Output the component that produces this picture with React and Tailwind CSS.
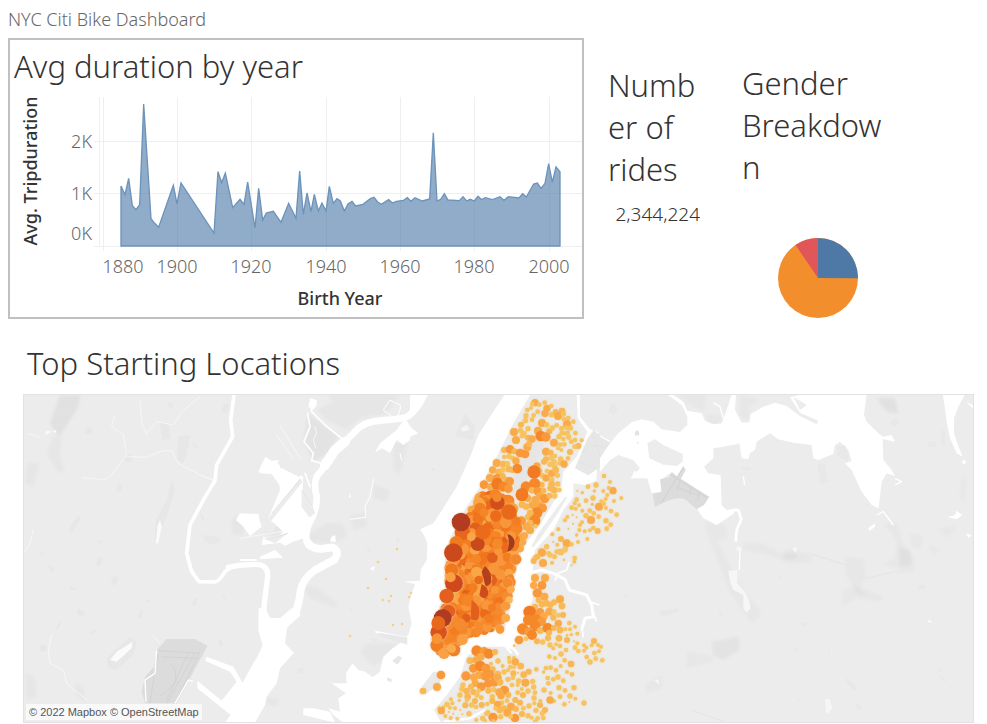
import React from "react";

const YEARS = [
  [123, "1880"],
  [177, "1900"],
  [251, "1920"],
  [326, "1940"],
  [400, "1960"],
  [474, "1980"],
  [549, "2000"],
];
const GRID_X = [103, 177, 251, 326, 400, 474, 549];

// Outline of the area series, in thirds of a pixel.
const AREA =
  "363,558 375,584 386,535 397,617 408,629 419,614 431,312 453,656 464,670 476,682 520,556 531,612 543,549 642,699 654,515 665,548 676,519 698,623 720,598 732,613 743,546 765,684 776,565 788,660 799,639 820,634 843,667 866,610 888,655 899,513 910,643 921,579 933,635 943,583 955,633 966,609 978,633 988,559 1000,610 1011,596 1021,603 1033,633 1044,612 1056,604 1067,618 1089,613 1111,596 1122,592 1133,606 1144,613 1166,599 1177,609 1189,604 1211,601 1222,593 1233,604 1245,593 1267,603 1289,597 1300,398 1311,603 1322,598 1333,581 1344,600 1378,602 1389,590 1400,603 1411,598 1423,603 1434,589 1445,599 1456,593 1478,599 1500,590 1512,601 1525,590 1557,594 1568,581 1579,591 1601,552 1612,549 1623,565 1635,550 1646,491 1657,547 1668,501 1680,515 1680,738 363,738";

const NORTH_DOTS =
  "375,38,11 404,38,7 388,44,7 367,42,7 411,55,11 424,48,7 352,60,7 363,54,6 348,77,8 371,76,7 383,65,7 405,70,11 424,74,8 437,66,9 456,63,10 444,78,12 460,72,8 475,84,7 490,95,7 471,102,12 462,88,7 346,92,8 366,89,7 396,99,12 410,104,8 418,124,9 427,114,8 440,106,7 455,115,8 470,113,7 481,114,8 333,104,9 354,116,8 384,122,12 312,126,12 331,121,8 342,130,8 337,137,8 318,150,12 354,143,9 366,147,11 392,138,16 408,141,14 432,158,12 447,140,8 460,147,7 476,141,8 455,129,7 463,130,7 473,128,7 496,129,7 484,155,7 495,150,7 505,168,9 515,151,6 494,170,7 450,164,7 463,163,7 480,186,9 444,175,6 454,180,6 282,180,9 300,178,13 313,184,9 330,189,13 345,192,13 352,172,12 357,162,9 297,199,8 283,201,7 309,205,8 318,213,11 408,185,12 422,188,9 435,198,7 424,204,8 408,208,9 402,215,9 432,215,8 420,223,8 434,229,8 448,220,7 452,207,8 474,205,7 462,222,11 260,219,12 279,222,10 292,221,8 296,237,10 322,236,14 308,240,9 248,240,11 266,246,10 278,240,8 381,228,11 388,242,9 425,250,11 437,240,10 442,256,8 411,243,7 240,264,12 262,266,14 278,258,9 288,270,10 299,274,13 397,257,8 408,264,11 425,269,8 395,284,9 425,283,10 443,282,8 448,300,7 432,300,10 421,295,9 434,318,8 222,284,13 243,291,12 262,282,18 280,290,15 295,296,13 348,290,16 374,281,17 366,301,10 384,304,13 400,302,9 389,318,12 404,326,14 418,317,9 336,314,19 218,322,18 353,325,11 376,330,12 368,345,12 336,344,10 349,350,10 385,345,12 397,354,14 380,369,17 361,369,10 354,381,9 374,392,17 360,399,10 334,393,14 350,410,12 360,420,12 376,408,7 343,437,11 338,456,11 330,475,12";

const QUEENS_DOTS =
  "582,258,7 600,276,6 558,285,8 534,290,7 609,302,11 596,294,6 580,303,6 553,303,5 517,308,5 502,303,3 634,324,6 592,315,6 587,327,6 549,324,8 528,332,7 500,329,7 494,340,6 507,346,6 485,353,7 497,356,6 547,343,5 567,350,12 581,341,7 588,354,6 603,363,7 620,374,7 612,333,6 574,334,6 517,362,6 539,362,7 551,370,7 472,381,6 465,391,6 488,375,3 500,382,3 528,377,8 543,390,12 566,380,7 588,392,8 602,404,7 590,416,7 516,397,6 510,405,6 475,416,3 489,401,3 508,420,6 524,424,6 540,421,6 550,414,7 563,423,9 445,418,6 427,433,6 500,435,5 453,447,9 442,464,6 470,460,12 484,463,7 430,456,3 504,456,6 532,447,6 410,470,8 395,486,11 466,476,8 452,486,10 440,485,7 420,495,8 433,500,7 462,509,3 494,504,7 375,504,8";

const BROOKLYN_DOTS =
  "396,8,12 416,10,7 382,20,9 434,20,7 399,39,12 371,33,9 426,38,6 452,6,8 466,2,6 462,30,3 494,24,6 493,35,6 485,46,3 375,84,12 405,84,12 371,106,11 396,106,13 382,129,14 403,140,12 386,150,9 450,148,12 456,168,10 432,157,9 421,165,9 396,163,10 410,160,10 375,170,9 359,186,19 390,187,13 401,199,12 418,185,12 432,186,8 445,196,7 459,195,9 430,203,9 378,208,16 355,210,16 395,215,13 375,228,16 338,237,17 356,245,13 366,255,15 390,242,10 404,238,9 413,234,15 431,234,9 445,220,11 417,248,9 450,240,10 447,265,10 327,270,13 348,266,7 381,274,9 398,276,8 414,264,9 466,238,6 478,219,7 495,230,6 480,238,6 484,254,5 502,251,6 471,270,9 471,256,4 492,274,3 502,280,6 495,293,7 522,286,6 529,293,6 545,286,6 552,273,9 564,285,6 573,290,6 567,304,6 553,309,7 522,302,6 505,303,7 530,321,7 540,336,8 557,326,7 577,331,7 420,285,8 430,295,6 438,283,6 450,288,7 468,300,7 313,287,4 453,312,8 435,324,6 418,320,7 464,331,7 483,342,10 452,348,6 422,353,7 408,354,7 438,361,7 379,358,7 401,366,5 413,384,7 430,388,7 444,381,8 460,392,7 471,366,6 486,373,7 492,413,8 447,413,8 415,400,7 402,420,8 465,421,7 422,429,6 480,438,8 496,446,6 450,440,7 432,453,6 463,463,7 478,456,3 522,459,8 420,450,11";

const SOUTH_DOTS =
  "200,302,16 222,304,13 236,311,15 255,306,9 212,320,12 180,332,10 200,330,12 190,355,13 211,348,16 228,355,14 243,341,6 248,358,9 264,333,8 263,372,10 278,348,6 282,366,8 297,323,6 312,324,6 299,335,7 316,336,11 332,348,10 301,351,7 312,352,6 294,361,6 310,370,9 324,368,3 356,365,9 341,374,10 168,378,14 192,382,12 208,375,12 226,378,14 240,373,13 196,400,11 214,410,13 235,400,13 253,396,14 263,384,12 270,397,10 294,388,8 309,383,7 326,393,8 306,405,7 323,405,6 346,398,12 368,394,8 354,423,8 335,417,6 371,411,8 375,428,7 339,435,9 323,428,7 372,444,8 159,405,8 156,417,8 150,435,8 170,423,10 173,440,10 183,410,9 190,426,9 201,435,8 206,422,7 214,443,7 235,422,9 251,419,8 247,440,8 283,421,14 268,427,12 273,437,11 295,435,9 316,450,9 291,452,7 330,458,9 276,458,7 263,463,11 247,453,9 232,462,7 215,465,9 198,471,7 195,453,9 185,465,8 171,450,7 166,466,9 303,470,12 318,477,9 282,475,9 292,488,12 269,480,10 257,475,7 249,502,14 272,500,8 234,487,7 229,491,7 315,504,13 302,500,7 336,492,9 340,475,7 357,468,8 373,460,6 390,465,9 391,453,6 405,480,9 397,490,8 378,481,8 354,497,8 383,505,7 400,504,7 365,503,6 376,515,7 177,491,8 151,480,3 135,475,6 148,451,5 123,448,6 127,460,6 111,463,8 100,472,6 120,473,6 88,475,6 94,482,11 106,498,6 116,486,3 130,491,3 122,504,6 142,506,6 157,493,3 199,510,6 218,505,8 225,512,6 250,514,7 93,375,13 81,411,12 39,423,10";

// Largest stations: x, y, radius, fill.
const HOT_NORTH = [
  [262, 338, 22, "#d04f1f"],
  [261, 322, 14, "#f58a2c"],
  [297, 366, 23, "#e8691c"],
  [157, 428, 23, "#e8661b"],
  [153, 396, 28, "#b33a20"],
  [140, 458, 20, "#f07a20"],
  [130, 488, 28, "#cc4a1e"],
  [203, 462, 21, "#c8481f"],
  [220, 427, 22, "#ec6b1b"],
  [184, 440, 13, "#f9a548"],
  [262, 462, 16, "#f58a2c"],
];
const HOT_SOUTH = [
  [125, 60, 20, "#f0791f"],
  [132, 100, 27, "#cf4a1e"],
  [122, 82, 15, "#f8a043"],
  [110, 138, 22, "#e4611b"],
  [116, 184, 20, "#e4611b"],
  [98, 204, 27, "#ae3b20"],
  [86, 247, 25, "#d7541e"],
  [85, 219, 21, "#e8671b"],
  [81, 286, 20, "#f17f24"],
  [81, 266, 16, "#f89435"],
  [102, 310, 17, "#f9a044"],
  [132, 300, 19, "#f2802a"],
  [125, 296, 13, "#f9ac4c"],
  [158, 270, 15, "#f9a142"],
];

function tone(r) {
  if (r >= 18) return "#f17a20";
  if (r >= 15) return "#f5892c";
  if (r >= 13) return "#f8993a";
  if (r >= 11) return "#f9ab4a";
  if (r >= 9) return "#f8b853";
  return "#f6c35b";
}

function Dots({ list }) {
  return list.split(" ").map((entry, i) => {
    const [x, y, r] = entry.split(",").map(Number);
    return <circle key={i} cx={x} cy={y} r={r} fill={tone(r)} />;
  });
}

// Midtown and downtown: bounds of the packed band as [y, left, right].
const BAND = [
  [318, 225, 275],
  [345, 200, 305],
  [400, 178, 325],
  [450, 145, 322],
  [500, 130, 315],
  [560, 125, 300],
  [620, 120, 290],
  [660, 115, 282],
  [700, 95, 272],
  [725, 90, 230],
  [740, 90, 150],
  [785, 95, 140],
];

function bandAt(y) {
  for (let i = 1; i < BAND.length; i++) {
    const a = BAND[i - 1];
    const b = BAND[i];
    if (y <= b[0]) {
      const t = (y - a[0]) / (b[0] - a[0]);
      return [a[1] + (b[1] - a[1]) * t, a[2] + (b[2] - a[2]) * t];
    }
  }
  return [95, 140];
}

function packedStations() {
  let seed = 41;
  const rand = () => {
    seed = (seed * 1103515245 + 12345) % 2147483648;
    return seed / 2147483648;
  };
  const fills = ["#f9a646", "#f8963a", "#f68a2e", "#f58528", "#f37e24", "#f0741e", "#ec6b1b", "#f8963a", "#f58528", "#f37e24"];
  const out = [];
  for (let y = 318; y < 785; y += 9) {
    const [left, right] = bandAt(y);
    for (let x = left; x <= right; x += 17) {
      const r = 11 + rand() * 8;
      const edge = Math.min(x - left, right - x) < 14 || y > 690;
      const pick = Math.floor(rand() * (edge ? 5 : fills.length));
      const deep = !edge && y > 330 && rand() > 0.94;
      out.push({
        x: Math.round(x + (rand() - 0.5) * 16),
        y: Math.round(y + (rand() - 0.5) * 10),
        r: Math.round(r),
        fill: deep ? "#e0601c" : fills[pick],
        order: rand(),
      });
    }
  }
  return out.sort((a, b) => a.order - b.order);
}
const PACKED = packedStations();

function DurationChart() {
  return (
    <svg viewBox="10 92 572 225" className="block h-auto w-full font-['Noto_Sans',sans-serif]" role="img" aria-label="Average trip duration by birth year">
      <g stroke="#efefef" strokeWidth="1" shapeRendering="crispEdges">
        <path d="M99.5 97V246M94 141.5H582M94 193.5H582M94 246.5H582" />
        {GRID_X.map((x) => (
          <path key={x} d={`M${x + 0.5} 97V251`} />
        ))}
      </g>
      <polygon transform="scale(.33333)" points={AREA} fill="#4e79a7" fillOpacity=".62" stroke="#6c93bb" strokeWidth="4" />
      <g fill="#666" fontSize="18" fontWeight="300">
        <text x="92" y="148" textAnchor="end">2K</text>
        <text x="92" y="200" textAnchor="end">1K</text>
        <text x="92" y="240" textAnchor="end">0K</text>
        {YEARS.map(([x, label]) => (
          <text key={label} x={x} y="273" textAnchor="middle">{label}</text>
        ))}
      </g>
      <g fill="#333" fontSize="18" fontWeight="500" textAnchor="middle">
        <text x="340" y="305">Birth Year</text>
        <text transform="translate(37 171) rotate(-90)">Avg. Tripduration</text>
      </g>
    </svg>
  );
}

function GenderPie() {
  return (
    <svg viewBox="0 0 80 80" className="size-20" role="img" aria-label="Gender breakdown">
      <circle cx="40" cy="40" r="40" fill="#f28e2b" />
      <path d="M40 40V0A40 40 0 0 1 80 40.300Z" fill="#4e79a7" />
      <path d="M40 40L17.500 7A40 40 0 0 1 40 0Z" fill="#e15759" />
    </svg>
  );
}

function WestMap() {
  return (
    <>
      <g transform="translate(0 330) scale(.33333)">
        <g fill="#e6e6e6" filter="url(#soft)">
          <path d="M180 195H240L235 230L185 310L175 320L150 280Z" fill="#e1e1e1" />
          <path d="M160 320L185 320L180 380L195 430L170 420L140 370Z" />
          <path d="M80 400L120 400L100 470L75 460ZM75 1030L105 1040L110 1100L80 1110ZM225 1060L250 1070L255 1120L225 1090Z" />
        </g>
        <g fill="#e7e7e7">
          <path d="M515 450L525 480L500 560L485 590L475 640L465 620L468 570L500 510ZM480 275L505 285L512 325L485 330ZM535 320L570 315L560 370L550 400L530 390ZM575 330L595 350L585 358ZM500 215L522 222L512 240ZM235 555L242 565L218 605L205 600ZM295 680L310 685L298 712L288 705ZM340 735L357 743L345 767L333 760ZM292 630L304 630L300 642ZM235 835L255 850L245 860L230 848ZM320 985L390 920L410 935L400 975L350 1020L325 1015ZM270 910L283 897L288 903L273 918ZM437 808L450 810L442 820ZM582 805L593 808L585 830L576 826ZM600 548L614 565L606 572ZM608 615L660 630L650 642L615 637ZM205 765L230 780L215 780ZM140 700L163 718L155 728ZM120 672L134 665L128 677ZM350 470L363 460L366 480L350 487ZM180 875L184 880L172 900L167 895ZM418 845L430 842L423 864L415 864ZM655 925L670 940L660 953ZM672 220L690 225L680 250L665 245ZM665 795L680 802L672 808Z" />
          <circle cx="265" cy="302" r="11" /><circle cx="385" cy="385" r="12" /><circle cx="130" cy="955" r="11" />
        </g>
        <path d="M500 927H585L622 947L530 1120H435L425 1085L435 1040L462 1010L470 960Z" fill="#dcdcdc" />
        <path d="M470 962L606 970M485 980L590 985M600 965L525 1120M585 968L500 1120M475 970L465 1020L450 1120M565 968L500 1110M510 1000Q535 1020 525 1060L480 1100" fill="none" stroke="#d3d3d3" strokeWidth="3" />
        <g fill="none" stroke="#f6f6f6" strokeWidth="3" strokeLinejoin="round">
          <path d="M345 255L335 290L370 315L380 375L330 440L310 450L245 443M380 380L440 382L490 362H515L535 400L600 435L645 452M420 210L425 280L440 310L470 275L520 285L550 240L600 200M85 310L118 323M100 600L90 640L73 668M155 912L145 960L150 1000L190 1020L200 1060L260 1110M455 910L480 940" />
          <path stroke="#fff" strokeWidth="4" d="M470 960L465 1030L435 1050L438 1115M525 1120L565 1050L580 1055" />
        </g>
        <g fill="#fbfbfb">
          <path d="M480 570L485 590L475 640H468L472 590ZM398 935L395 955L350 995L330 990L350 965ZM135 315L140 302L155 305ZM158 302L170 300L165 310Z" />
        </g>
      </g>

      <g transform="translate(200 390) scale(.33333)">
        <g fill="#e6e6e6" filter="url(#soft)">
          <path d="M325 70L415 140L385 190L340 215L310 155Z" fill="#e3e3e3" />
          <path d="M440 12H600L560 70L480 85L440 120L380 90L350 60ZM420 60L380 12H450Z" />
          <path d="M95 385L135 370L130 440L95 430ZM380 400L430 400L440 440L400 460L320 455L340 420ZM500 760L590 760L580 790L520 830L480 790ZM580 160L625 150L600 255L580 240ZM520 285L570 300L560 335L520 325ZM450 375L500 370L500 410L460 420ZM310 590L350 590L410 640V655L330 625ZM270 370L240 440L190 430ZM200 920L240 930L225 950L195 940Z" />
        </g>
        <path d="M0 755L20 770L5 800H0Z" fill="#dcdcdc" />
        <g fill="#e8e8e8">
          <path d="M10 435L60 440V458L15 455ZM500 470L515 480L505 490ZM590 440L605 448L590 458ZM510 745L535 745L530 760ZM450 650L460 655L450 665ZM290 835L310 830L313 850L295 850ZM470 850L490 855L480 885L470 880Z" />
        </g>
        <g fill="none" stroke="#f7f7f7" strokeWidth="3">
          <path d="M240 105L300 205M230 135L278 205M120 445L270 420M0 255L40 270M345 110L350 130L340 150L348 175" />
        </g>
        <g fill="none" stroke="#fff" strokeLinejoin="round" strokeLinecap="round">
          <path strokeWidth="11" d="M102 15L92 90L98 140L50 225L45 272L10 330L-30 405L-40 490L-25 545L-3 575L45 576Q60 572 75 545Q90 530 120 527" />
          <path strokeWidth="16" d="M85 532Q110 525 165 523Q205 522 203 560L193 640L190 700" />
          <path strokeWidth="20" d="M655 12L645 50Q635 82 600 86L540 92Q490 95 465 125L440 150" />
          <path strokeWidth="30" d="M435 155L405 180L375 225" />
          <path strokeWidth="20" d="M385 215L350 260Q340 285 350 320Q352 360 328 400Q310 440 325 465" />
          <path strokeWidth="23" d="M322 455Q335 480 370 476L398 472Q422 485 402 510L345 540Q310 565 302 600Q298 640 285 672" />
          <path strokeWidth="5" d="M323 70L330 110L312 155L340 190L335 212L370 222M333 45L335 65L375 105L425 145M315 250L330 290" />
          <path strokeWidth="3" d="M520 268L510 320L495 350L498 382L450 388M600 60L590 90L550 60L570 30L600 45ZM600 190L605 210" />
        </g>
        <g fill="#fff">
          <path d="M176 242L196 200L215 212L240 210L240 235L270 235L290 250L310 260L308 300L305 350L330 385L325 440L280 455L255 467L240 458L185 465L190 440L225 445L250 425L205 385L240 300L238 285L215 252L180 250Z" />
          <path d="M120 370L175 372L180 395L185 410L150 438L130 410L108 390ZM180 500L225 480L250 503L180 508ZM120 507H170V513H120Z" />
          <path d="M540 160L590 120L615 85L635 115L630 150L610 165L590 150L570 188L545 175L525 188ZM330 25L350 30V45L340 60L325 50ZM640 12H685L665 50L640 80ZM445 322L452 310V322ZM510 535L525 528L520 542ZM395 440L405 435L408 455H390Z" />
          <path d="M176 655L196 655L210 683L240 685L275 655H300V678L262 712L255 760L282 788L240 835L230 880L200 920L195 945L165 998H75L92 975L-8 895V872L65 932L110 875L90 845L15 812L20 800L100 830L128 878L155 828L172 800L188 766L175 720Z" />
        </g>
        <path d="M300 265L205 385L214 392L308 275ZM200 400L230 405L215 430L185 420ZM190 445L265 428L225 460ZM305 300L335 340L345 370L330 382L305 350ZM275 225L300 230V262L255 240L232 220L240 205Z" fill="#ececec" />
        <path d="M300 270L215 370M200 450L265 430M305 300L335 345" stroke="#e3e3e3" strokeWidth="3" fill="none" />
      </g>
    </>
  );
}

function HarborMap() {
  return (
    <>
      <g transform="translate(200 390) scale(.33333)" fill="#fff">
        <path d="M915 12L870 80L835 135L815 190L770 290L720 370L700 400L660 418L672 435L682 460L680 510L662 540L660 572L610 575L645 582L632 622L625 650L635 700L625 735L600 760L578 775L550 800L540 845L518 862L495 845L475 840L458 820L438 850L440 880H395L438 910L415 925L420 965L385 955L400 975L430 998H915L900 940L945 880L990 800L1180 500L1200 12Z" />
        <path d="M310 955H340L390 965L405 998L350 985L310 975Z" />
        <path d="M525 722L620 740L622 748L527 728Z" />
        <path d="M536 728L622 742V764L538 738Z" fill="#e8e8e8" />
        <path d="M577 812L595 797L607 803L592 824ZM560 862L575 868V876L562 872Z" fill="#e6e6e6" />
      </g>
      <g transform="translate(410 390) scale(.33333)">
        <path d="M362 12H500L503 85L532 125L500 200L460 245L453 300L425 345L390 405L340 470L328 510L315 560L308 630L285 715L240 728L165 745L130 800L90 800L60 750L75 680L105 610L105 480L150 380L210 290L260 200L310 100Z" fill="#ececec" />
        <path d="M510 12H665V105L630 150L600 155L575 130L540 118L510 80Z" fill="#ececec" />
        <path d="M495 235L530 150L550 120L570 135L603 160L590 190L570 200L572 230L535 256Z" fill="#e7e7e7" />
        <path d="M515 190L535 165L580 170M505 215L560 235M550 130L570 200" fill="none" stroke="#e0e0e0" strokeWidth="2" />
        <path d="M365 468L385 430L465 320L472 322L440 375L395 440L370 472Z" fill="#ececec" />
        <path d="M665 200L625 198L595 235L565 270L525 285L490 280L490 320L460 360L430 420L375 480L365 560L368 630L340 680L335 740L310 780L285 770L210 770L170 800L150 860L110 915L72 960L95 1000H665Z" fill="#ececec" />
        <path d="M370 60L420 60L390 110L345 190L325 220L300 300L320 330L350 270L385 210L420 120Z" fill="#e6e6e6" filter="url(#soft)" />
        <path d="M35 890L70 845L95 845L90 880L45 915Z" fill="#e9e9e9" />
        <path d="M165 70L195 110L190 150L135 140ZM65 230L75 238L65 245ZM610 40L622 60L610 72L597 60Z" fill="#e7e7e7" />
        <path d="M150 115L170 105L180 118L160 125Z" fill="#f4f4f4" />
        <path d="M0 12H12V60H0ZM25 12H50L20 45ZM0 110L25 130L0 140Z" fill="#fff" />
      </g>
      <g transform="translate(410 550) scale(.33333)" fill="none" stroke="#fff" strokeLinejoin="round">
        <path strokeWidth="9" d="M362 68L395 60L430 70L465 88L478 120L530 135L545 165L550 200L525 205L515 240" />
        <path strokeWidth="5" d="M435 92L445 70L470 60L478 35M540 155L568 165M550 190L560 215M515 225L520 262" />
        <path strokeWidth="7" d="M285 260L325 315M275 275L305 310M100 515L180 505L225 480" />
      </g>
    </>
  );
}

function EastMap() {
  return (
    <g transform="translate(600 390) scale(.33333)">
      <g fill="#e7e7e7" filter="url(#soft)">
        <path d="M230 12H320L310 65L265 40ZM420 12L480 30L450 50L445 95L420 80ZM320 70L365 80V105H320Z" />
        <path d="M830 25L885 25L895 70L860 65Z" fill="#e1e1e1" />
        <path d="M310 395L375 405L385 445L350 450L375 500L430 600L480 660V685L455 700L385 600L340 480ZM430 458L485 460L540 490L570 475L635 495L630 518L570 520L500 495L430 480ZM735 500L790 505L800 560L780 590L850 620L840 635L770 625L725 650L730 600L760 590L735 550ZM850 400L890 400L910 460L945 510L940 545L900 550L895 535L850 525L885 505L890 450ZM930 430L970 440L960 475L935 470ZM985 465L1018 480L1000 498ZM1085 260L1100 265L1092 340L1080 320ZM1015 415L1075 410L1040 445Z" />
        <path d="M335 755L415 740L420 780L370 810L340 795Z" fill="#e3e3e3" />
        <path d="M260 785L335 795L340 815L260 835ZM140 880L185 855L190 890L150 905L135 915Z" />
        <path d="M895 470L930 480L935 525L900 530ZM550 490H590V510H550ZM760 580L800 620L770 610Z" fill="#e0e0e0" />
      </g>
      <g fill="#e8e8e8">
        <path d="M652 222L675 220L685 275L660 285ZM180 662L235 655L237 665L182 682ZM870 95L885 85L900 97L880 110ZM425 232H452V240H425ZM985 155H1008V172H985ZM1005 832L1025 840L1020 845ZM1012 855L1040 870L1035 875ZM740 862L770 890L765 905L740 880ZM760 935L785 950L775 962ZM955 585H975V597H955ZM585 770L595 785H583ZM685 775L692 795L683 785ZM600 695L625 700L615 710ZM30 40L48 48L42 75L28 65ZM70 612L88 620L80 625ZM355 665L373 672L360 680ZM535 555L545 562L535 568ZM590 925L600 932L592 938ZM1020 120L1035 125V170L1025 160Z" />
      </g>
      <path d="M633 492L740 525M800 565L900 542M275 962L365 992V998" fill="none" stroke="#e6e6e6" strokeWidth="4" />
      <path
        fill="#fff"
        d="M0 205L30 160L55 130L95 97L125 88L160 95L185 118L240 126L262 105L262 80L245 45L200 12H215L250 35L262 62L305 70L315 92L340 103L365 100L385 45L395 12H408L405 60L425 98L448 97L452 72L490 50L525 38L560 48L600 78L650 103L655 92L600 68L570 22L610 12L800 12L792 75L800 95L835 130L850 140L875 135L885 155L848 148L850 210L875 240L885 258L860 250L845 275L836 355L815 345L785 305L755 240L735 220L755 213L745 180L720 155L705 165L700 192L655 210L640 205L635 165L580 158L535 148L510 130L470 155L465 180L450 190L445 208L425 205L418 160L400 165L340 175L340 205L312 230L325 250L362 255L365 345L380 360L410 355L400 372L350 405L310 385L290 355L325 320L250 270L210 250L182 270L183 305L155 310L142 265L92 265L120 235L100 210L55 195L30 210L0 245Z"
      />
      <path d="M142 160L165 148L190 165L248 192V215L230 228L190 224L148 205Z" fill="#ececec" />
      <path d="M105 125L115 120L118 135L105 137ZM112 155L118 158L112 162Z" fill="#e2e2e2" />
      <path d="M580 20L620 45L600 60Z" fill="#ececec" />
      <path d="M158 312L185 305L180 268L208 262L215 245L232 260L250 228L257 240L242 268L328 320L312 345L290 358L255 328Q225 315 165 352Z" fill="#dcdcdc" />
      <path d="M250 232L185 338M212 253L322 324M228 290L300 318M240 270L232 302M275 290L268 315M300 305L292 332" fill="none" stroke="#d4d4d4" strokeWidth="4" />
      <path d="M710 170L735 165L745 190L745 215L725 205L710 195Z" fill="#e8e8e8" />
      <g fill="none" stroke="#fff" strokeLinejoin="round">
        <path strokeWidth="8" d="M400 360L415 360L424 388L410 420L407 455" />
        <path strokeWidth="4" d="M420 480L418 540M430 260L434 285M95 265L105 245L130 255M340 38L360 50L370 85M830 375L850 365L880 405M885 265L905 275L885 285M0 138L30 155" />
      </g>
      <g fill="#fff">
        <path d="M1028 12H1096L1075 50L1062 85L1062 130L1072 160L1088 200L1070 190L1050 145L1040 95L1035 55ZM1098 35L1118 45V55ZM1042 382L1065 375L1070 362L1087 375L1070 388ZM1098 430L1115 436L1105 443ZM982 695L988 690L998 697ZM805 415L825 400V410L808 424Z" />
        <circle cx="1092" cy="216" r="6" />
      </g>
      <g fill="#f6f6f6">
        <path d="M385 542L412 540V580L430 600L445 625L452 655L440 668L430 655V615L400 600L390 575ZM410 470H424V482H410ZM575 475L592 472L588 490ZM675 928H688L697 955L685 970H678ZM163 870L175 868L178 885Z" />
      </g>
    </g>
  );
}

function Stations() {
  return (
    <>
      <g fill="#f3d27c">
        {["397,549", "378,562", "386,579", "368,588", "391,596", "383,600", "389,601", "411,593", "409,597", "393,625", "402,624", "350,636"].map((p) => {
          const [x, y] = p.split(",");
          return <circle key={p} cx={x} cy={y} r="1.300" />;
        })}
      </g>
      <g transform="translate(410 390) scale(.33333)" filter="url(#halo)">
        <Dots list={NORTH_DOTS} />
        <Dots list={QUEENS_DOTS} />
        {PACKED.map((d, i) => (
          <circle key={i} cx={d.x} cy={d.y} r={d.r} fill={d.fill} />
        ))}
        <circle cx="322" cy="236" r="14" fill="#f58a2c" />
        <circle cx="336" cy="314" r="19" fill="#f17a20" />
        <circle cx="372" cy="246" r="20" fill="#f17a20" />
        <circle cx="316" cy="508" r="16" fill="#f0781f" />
        <path d="M292 432A27 27 0 0 1 292 485Q302 458 292 432Z" fill="#a03a24" />
        <path d="M225 528Q250 550 242 580Q225 600 222 570L215 545Z" fill="#b2401f" />
        <path d="M215 582Q238 592 235 615Q220 635 208 615Z" fill="#cf4c1d" />
        <path d="M185 630Q210 645 208 670Q208 700 182 688Z" fill="#e2601c" />
        {HOT_NORTH.map(([x, y, r, fill]) => (
          <circle key={`${x}-${y}`} cx={x} cy={y} r={r} fill={fill} />
        ))}
      </g>
      <g transform="translate(410 550) scale(.33333)" filter="url(#halo)">
        <Dots list={BROOKLYN_DOTS} />
        <Dots list={SOUTH_DOTS} />
        <Dots list="318,28,16 293,100,15 303,118,11 298,150,10 288,168,13 288,204,12 270,238,13" />
        {HOT_SOUTH.map(([x, y, r, fill]) => (
          <circle key={`${x}-${y}`} cx={x} cy={y} r={r} fill={fill} />
        ))}
      </g>
    </>
  );
}

function StationMap() {
  return (
    <svg viewBox="24 395 949 327" className="block h-auto w-full" role="img" aria-label="Map of top starting locations">
      <defs>
        <filter id="soft" x="-10%" y="-10%" width="120%" height="120%">
          <feGaussianBlur stdDeviation="5" />
        </filter>
        <filter id="halo" x="-5%" y="-5%" width="110%" height="110%">
          <feDropShadow dx="0" dy="0" stdDeviation="3" floodColor="#f3cf9c" floodOpacity=".8" />
        </filter>
      </defs>
      <rect x="23" y="394" width="951" height="329" fill="#ececec" />
      <WestMap />
      <HarborMap />
      <EastMap />
      <Stations />
    </svg>
  );
}

export default function App() {
  return (
    <main className="min-h-screen bg-white font-['Noto_Sans',sans-serif] font-light text-[#333]">
      <h1 className="flex h-[38px] items-center px-2 text-[18px] leading-6 font-light text-[#666]">NYC Citi Bike Dashboard</h1>

      <div className="grid grid-cols-[minmax(0,576fr)_minmax(0,403fr)] items-start pl-2">
        <section className="border-2 border-[#c0c0c0]">
          <h2 className="px-1 text-[31px] leading-[52px] font-light">Avg duration by year</h2>
          <DurationChart />
        </section>

        <div className="flex gap-[42px] pt-6 pl-6">
          <section className="w-[92px] pt-0.5">
            <h2 className="text-[31px] leading-[42px] font-light wrap-anywhere">Number of rides</h2>
            <p className="pt-3 text-right text-[19px] leading-6">2,344,224</p>
          </section>
          <section className="flex w-[152px] flex-col items-center gap-[50px]">
            <h2 className="w-full text-[31px] leading-[42px] font-light wrap-anywhere">Gender Breakdown</h2>
            <GenderPie />
          </section>
        </div>
      </div>

      <section className="pt-[18px] pr-[13px] pl-[23px]">
        <h2 className="px-1 text-[31px] leading-[52px] font-light">Top Starting Locations</h2>
        <div className="relative mt-[5px] border border-[#e2e2e2]">
          <StationMap />
          <p className="absolute bottom-0.5 left-0.5 bg-white/70 px-[3px] font-['Liberation_Sans',sans-serif] text-[11px] leading-4 font-normal text-[#555]">
            <a href="#mapbox">© 2022 Mapbox</a> <a href="#openstreetmap">© OpenStreetMap</a>
          </p>
        </div>
      </section>
    </main>
  );
}
